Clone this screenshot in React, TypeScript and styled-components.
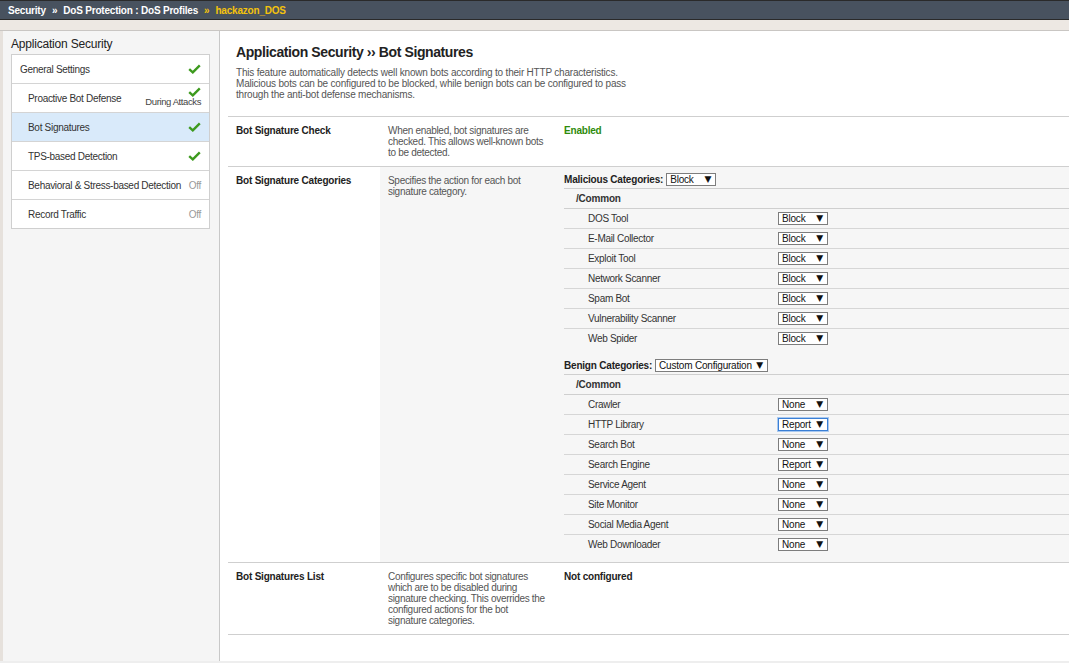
import styled, { createGlobalStyle } from 'styled-components'

const GlobalStyle = createGlobalStyle`
  html, body {
    margin: 0;
    padding: 0;
    background: #fff;
  }
  body {
    font-family: "Liberation Sans", Arial, sans-serif;
    color: #333;
  }
  * {
    box-sizing: border-box;
  }
`

const Page = styled.div`
  width: 1069px;
  height: 663px;
  display: flex;
  flex-direction: column;
  overflow: hidden;
`
const TopBar = styled.div`
  height: 20px;
  background: #48525f;
  border-top: 1px solid #2a2a2a;
  border-bottom: 1px solid #2a2a2a;
  display: flex;
  align-items: center;
  padding-left: 8px;
  font-size: 10px;
  font-weight: bold;
  color: #fff;
  letter-spacing: -0.2px;
`
const Crumb = styled.span<{ $active?: boolean }>`
  color: ${p => (p.$active ? '#f4c20d' : '#fff')};
`
const Sep = styled.span<{ $active?: boolean }>`
  margin: 0 6px;
  color: ${p => (p.$active ? '#f4c20d' : '#fff')};
`
const SubBar = styled.div`
  height: 11px;
  background: #ede8e3;
  border-bottom: 1px solid #c9c6c3;
`
const Body = styled.div`
  flex: 1;
  display: flex;
  min-height: 0;
`
const Sidebar = styled.aside`
  width: 220px;
  flex-shrink: 0;
  background: #f5f5f5;
  border-left: 3px solid #e6e1dc;
  border-right: 1px solid #c8c8c8;
  padding: 6px 9px 0 8px;
`
const SideTitle = styled.div`
  font-size: 12px;
  line-height: 14px;
  color: #222;
  margin-bottom: 3px;
  letter-spacing: -0.2px;
`
const Menu = styled.ul`
  list-style: none;
  margin: 0;
  padding: 0;
  background: #fff;
  border: 1px solid #cfcfcf;
`
const MenuItem = styled.li<{ $selected?: boolean; $indent?: boolean }>`
  height: 29px;
  display: flex;
  align-items: center;
  justify-content: space-between;
  padding: 0 8px 0 ${p => (p.$indent ? '16px' : '8px')};
  background: ${p => (p.$selected ? '#d9eafa' : '#fff')};
  border-top: 1px solid #d4d4d4;
  font-size: 10px;
  letter-spacing: -0.3px;
  color: #333;
  &:first-child {
    border-top: none;
    height: 28px;
  }
`
const Off = styled.span`
  color: #999;
`
const StackedStatus = styled.span`
  display: flex;
  flex-direction: column;
  align-items: flex-end;
  font-size: 9.5px;
  color: #444;
  margin-top: -2px;
  line-height: 10px;
  letter-spacing: -0.4px;
`
const Main = styled.main`
  flex: 1;
  background: #fff;
  padding: 13px 0 0 8px;
`
const Heading = styled.h1`
  margin: 0 0 6px 8px;
  font-size: 14px;
  line-height: 17px;
  font-weight: bold;
  color: #222;
  letter-spacing: -0.4px;
`
const Intro = styled.p`
  margin: 0 0 16px 8px;
  font-size: 10px;
  line-height: 11px;
  color: #555;
  width: 400px;
  letter-spacing: -0.2px;
`
const Row = styled.div`
  display: grid;
  grid-template-columns: 152px 176px 1fr;
  border-top: 1px solid #cfcfcf;
  &:last-child {
    border-bottom: 1px solid #cfcfcf;
  }
`
const LabelCell = styled.div`
  padding: 8px 8px;
  font-size: 10px;
  line-height: 11px;
  font-weight: bold;
  color: #222;
  letter-spacing: -0.2px;
`
const DescCell = styled.div<{ $shaded?: boolean }>`
  padding: 8px 8px;
  font-size: 10px;
  line-height: 11px;
  color: #555;
  letter-spacing: -0.3px;
  background: ${p => (p.$shaded ? '#f6f6f6' : 'transparent')};
`
const ValueCell = styled.div<{ $tone?: 'green' | 'dark' }>`
  padding: 8px 8px;
  font-size: 10px;
  line-height: 11px;
  font-weight: bold;
  letter-spacing: -0.2px;
  color: ${p => (p.$tone === 'green' ? '#2e8b0b' : '#222')};
`
const CategoryCell = styled.div`
  background: #f6f6f6;
  padding: 3px 0 7px 8px;
`
const Group = styled.div`
  & + & {
    margin-top: 7px;
  }
`
const GroupHeader = styled.div`
  height: 19px;
  display: flex;
  align-items: center;
  gap: 3px;
  font-size: 10px;
  font-weight: bold;
  color: #222;
  letter-spacing: -0.2px;
  border-bottom: 1px solid #cfcfcf;
`
const FolderRow = styled.div`
  height: 20px;
  display: flex;
  align-items: center;
  padding-left: 12px;
  font-size: 10px;
  font-weight: bold;
  color: #333;
  letter-spacing: -0.2px;
  border-bottom: 1px solid #cfcfcf;
`
const ItemRow = styled.div`
  height: 20px;
  display: grid;
  grid-template-columns: 214px auto;
  align-items: center;
  border-bottom: 1px solid #d6d6d6;
  font-size: 10px;
  color: #333;
  letter-spacing: -0.3px;
  &:last-child {
    border-bottom-color: transparent;
  }
`
const ItemLabel = styled.span`
  padding-left: 24px;
`
const Select = styled.span<{ $w: number; $focused?: boolean }>`
  width: ${p => p.$w}px;
  height: 13px;
  display: inline-flex;
  align-items: center;
  justify-content: space-between;
  padding: 0 4px 0 3px;
  background: #fff;
  border: 1px solid ${p => (p.$focused ? '#3a7fd5' : '#7d7d7d')};
  box-shadow: ${p => (p.$focused ? '0 0 0 1px #a9c9f0' : 'none')};
  font-size: 10px;
  font-weight: normal;
  color: #111;
  letter-spacing: -0.2px;
  line-height: 11px;
`
const Arrow = styled.span`
  font-family: "DejaVu Sans", sans-serif;
  font-size: 9px;
  color: #111;
`
const BottomStrip = styled.div`
  height: 2px;
  background: #eeeeee;
`

const Check = () => (
  <svg width="13" height="10" viewBox="0 0 13 10">
    <path d="M1.2 5.2 L4.8 8.4 L11.8 1.4" fill="none" stroke="#3d9a1e" strokeWidth="2.4" strokeLinejoin="miter" />
  </svg>
)

const Dropdown = ({ value, w, focused }: { value: string; w: number; focused?: boolean }) => (
  <Select $w={w} $focused={focused}>
    <span>{value}</span>
    <Arrow>▼</Arrow>
  </Select>
)

const malicious = [
  'DOS Tool',
  'E-Mail Collector',
  'Exploit Tool',
  'Network Scanner',
  'Spam Bot',
  'Vulnerability Scanner',
  'Web Spider',
]

const benign: [string, string][] = [
  ['Crawler', 'None'],
  ['HTTP Library', 'Report'],
  ['Search Bot', 'None'],
  ['Search Engine', 'Report'],
  ['Service Agent', 'None'],
  ['Site Monitor', 'None'],
  ['Social Media Agent', 'None'],
  ['Web Downloader', 'None'],
]

export default function App() {
  return (
    <Page>
      <GlobalStyle />
      <TopBar>
        <Crumb>Security</Crumb>
        <Sep>»</Sep>
        <Crumb>DoS Protection : DoS Profiles</Crumb>
        <Sep $active>»</Sep>
        <Crumb $active>hackazon_DOS</Crumb>
      </TopBar>
      <SubBar />
      <Body>
        <Sidebar>
          <SideTitle>Application Security</SideTitle>
          <Menu>
            <MenuItem>
              General Settings
              <Check />
            </MenuItem>
            <MenuItem $indent>
              Proactive Bot Defense
              <StackedStatus>
                <Check />
                <span>During Attacks</span>
              </StackedStatus>
            </MenuItem>
            <MenuItem $indent $selected>
              Bot Signatures
              <Check />
            </MenuItem>
            <MenuItem $indent>
              TPS-based Detection
              <Check />
            </MenuItem>
            <MenuItem $indent>
              Behavioral &amp; Stress-based Detection
              <Off>Off</Off>
            </MenuItem>
            <MenuItem $indent>
              Record Traffic
              <Off>Off</Off>
            </MenuItem>
          </Menu>
        </Sidebar>
        <Main>
          <Heading>Application Security ›› Bot Signatures</Heading>
          <Intro>
            This feature automatically detects well known bots according to their HTTP characteristics.
            Malicious bots can be configured to be blocked, while benign bots can be configured to pass
            through the anti-bot defense mechanisms.
          </Intro>
          <div>
            <Row>
              <LabelCell>Bot Signature Check</LabelCell>
              <DescCell>
                When enabled, bot signatures are checked. This allows well-known bots to be detected.
              </DescCell>
              <ValueCell $tone="green">Enabled</ValueCell>
            </Row>
            <Row>
              <LabelCell>Bot Signature Categories</LabelCell>
              <DescCell $shaded>Specifies the action for each bot signature category.</DescCell>
              <CategoryCell>
                <Group>
                  <GroupHeader>
                    Malicious Categories: <Dropdown value="Block" w={50} />
                  </GroupHeader>
                  <FolderRow>/Common</FolderRow>
                  {malicious.map(name => (
                    <ItemRow key={name}>
                      <ItemLabel>{name}</ItemLabel>
                      <Dropdown value="Block" w={50} />
                    </ItemRow>
                  ))}
                </Group>
                <Group>
                  <GroupHeader>
                    Benign Categories: <Dropdown value="Custom Configuration" w={113} />
                  </GroupHeader>
                  <FolderRow>/Common</FolderRow>
                  {benign.map(([name, v]) => (
                    <ItemRow key={name}>
                      <ItemLabel>{name}</ItemLabel>
                      <Dropdown value={v} w={50} focused={name === 'HTTP Library'} />
                    </ItemRow>
                  ))}
                </Group>
              </CategoryCell>
            </Row>
            <Row>
              <LabelCell>Bot Signatures List</LabelCell>
              <DescCell>
                Configures specific bot signatures which are to be disabled during signature checking.
                This overrides the configured actions for the bot signature categories.
              </DescCell>
              <ValueCell>Not configured</ValueCell>
            </Row>
          </div>
        </Main>
      </Body>
      <BottomStrip />
    </Page>
  )
}
